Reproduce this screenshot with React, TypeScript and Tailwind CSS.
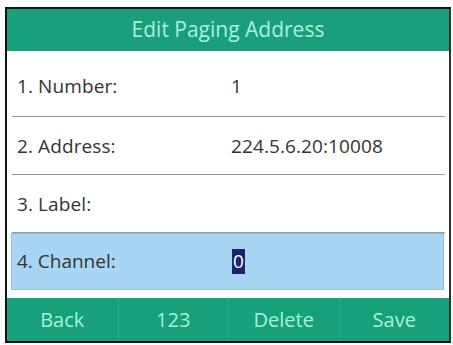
const FONT = "font-['Open_Sans','Liberation_Sans',sans-serif]";

const ROWS = [
  { label: '1. Number:', value: '1', h: 'h-[65px] pt-[6px]' },
  { label: '2. Address:', value: '224.5.6.20:10008', h: 'h-[57px] pt-[2px]' },
  { label: '3. Label:', value: '', h: 'h-[57px] pt-[2px]' },
];

const KEYS = ['Back', '123', 'Delete', 'Save'];

export default function App() {
  return (
    <div className={`w-[453px] h-[345px] bg-white pl-[5px] pt-[7px] ${FONT}`}>
      <div className="w-[446px] h-[336px] border-2 border-[#111] border-r-[#333] flex flex-col bg-white">
        {/* title bar */}
        <div className="h-[42px] bg-[#1a9f7c] flex items-center justify-center text-[21px] text-[#a8f2d8]">
          Edit Paging Address
        </div>

        {/* fields */}
        <div className="flex flex-col">
          {ROWS.map((r) => (
            <div key={r.label} className="flex flex-col">
              <div className={`${r.h} flex items-center text-[19px] text-[#333] tracking-[0.1px]`}>
                <span className="pl-[10px] w-[224px]">{r.label}</span>
                <span>{r.value}</span>
              </div>
              <div className="h-px bg-[#9a9a9a] ml-[5px] mr-[4px]" />
            </div>
          ))}
          <div className="h-[57px] ml-[4px] mr-[5px] bg-[#a9d5f4] border border-[#8cc2e6] flex items-center text-[19px] text-[#333]">
            <span className="pl-[5px] w-[220px]">4. Channel:</span>
            <span className="bg-[#1c2470] text-white leading-[25px] px-[1px]">0</span>
          </div>
        </div>

        <div className="flex-1" />

        {/* soft keys */}
        <div className="h-[43px] bg-[#17a07a] grid grid-cols-4 text-[20px] text-[#a8f2d8]">
          {KEYS.map((k, i) => (
            <div
              key={k}
              className={`flex items-center justify-center ${i > 0 ? 'border-l border-[#2aae88]' : ''}`}
            >
              {k}
            </div>
          ))}
        </div>
      </div>
    </div>
  );
}
